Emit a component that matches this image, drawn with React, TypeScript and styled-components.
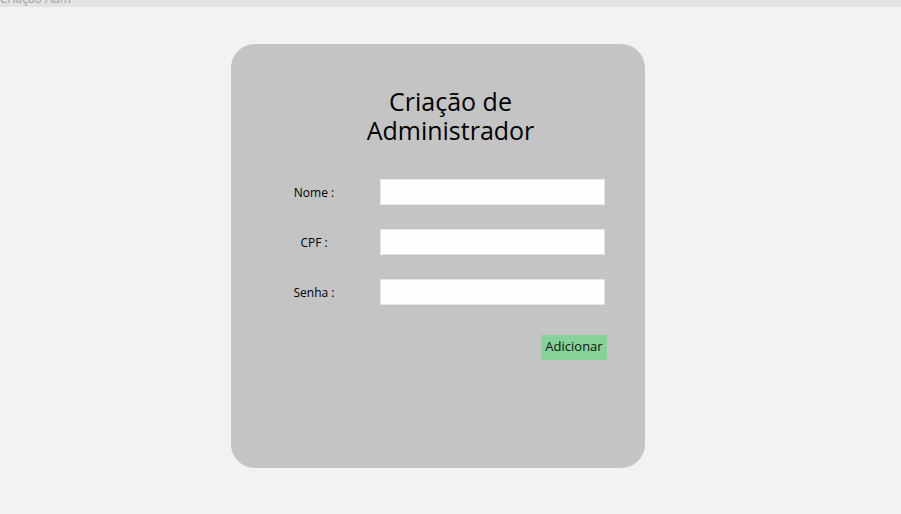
import styled, { createGlobalStyle } from "styled-components";

const GlobalStyle = createGlobalStyle`
  html, body {
    margin: 0;
    padding: 0;
    background: #f2f2f2;
    font-family: "Open Sans", "Liberation Sans", sans-serif;
    color: #000;
  }
`;

const TopBar = styled.div`
  height: 7px;
  background: #e3e3e3;
  overflow: hidden;
`;

const TopBarText = styled.span`
  display: block;
  margin-top: -8px;
  font-size: 12px;
  line-height: 14px;
  color: #a0a0a0;
`;

const Card = styled.div`
  width: 414px;
  height: 424px;
  box-sizing: border-box;
  margin: 37px 0 0 231px;
  padding: 43px 38px 0 39px;
  background: #c4c4c4;
  border-radius: 24px;
`;

const Title = styled.h1`
  margin: 0 0 34px 0;
  padding-left: 24px;
  font-size: 25px;
  line-height: 29px;
  font-weight: 400;
  text-align: center;
`;

const TitleLine = styled.span`
  display: block;
`;

const Form = styled.form`
  display: grid;
  grid-template-columns: 88px 227px;
  column-gap: 22px;
  row-gap: 24px;
  align-items: center;
`;

const Label = styled.label`
  font-size: 12px;
  text-align: center;
`;

const Input = styled.input`
  width: 225px;
  height: 26px;
  box-sizing: border-box;
  border: 1px solid #e6e6e6;
  background: #fffdff;
  outline: none;
  padding: 0 6px;
`;

const ButtonRow = styled.div`
  grid-column: 2;
  display: flex;
  justify-content: flex-end;
  margin-top: 6px;
`;

const Button = styled.button`
  width: 66px;
  height: 25px;
  border: none;
  background: #86d39a;
  font-family: inherit;
  font-size: 13px;
  color: #111;
  padding: 0 0 4px 0;
`;

export default function App() {
  return (
    <>
      <GlobalStyle />
      <TopBar>
        <TopBarText>Criação Adm</TopBarText>
      </TopBar>
      <Card>
        <Title>
          <TitleLine>Criação de</TitleLine>
          <TitleLine>Administrador</TitleLine>
        </Title>
        <Form onSubmit={(e) => e.preventDefault()}>
          <Label htmlFor="nome">Nome :</Label>
          <Input id="nome" type="text" />
          <Label htmlFor="cpf">CPF :</Label>
          <Input id="cpf" type="text" />
          <Label htmlFor="senha">Senha :</Label>
          <Input id="senha" type="password" />
          <ButtonRow>
            <Button type="submit">Adicionar</Button>
          </ButtonRow>
        </Form>
      </Card>
    </>
  );
}
